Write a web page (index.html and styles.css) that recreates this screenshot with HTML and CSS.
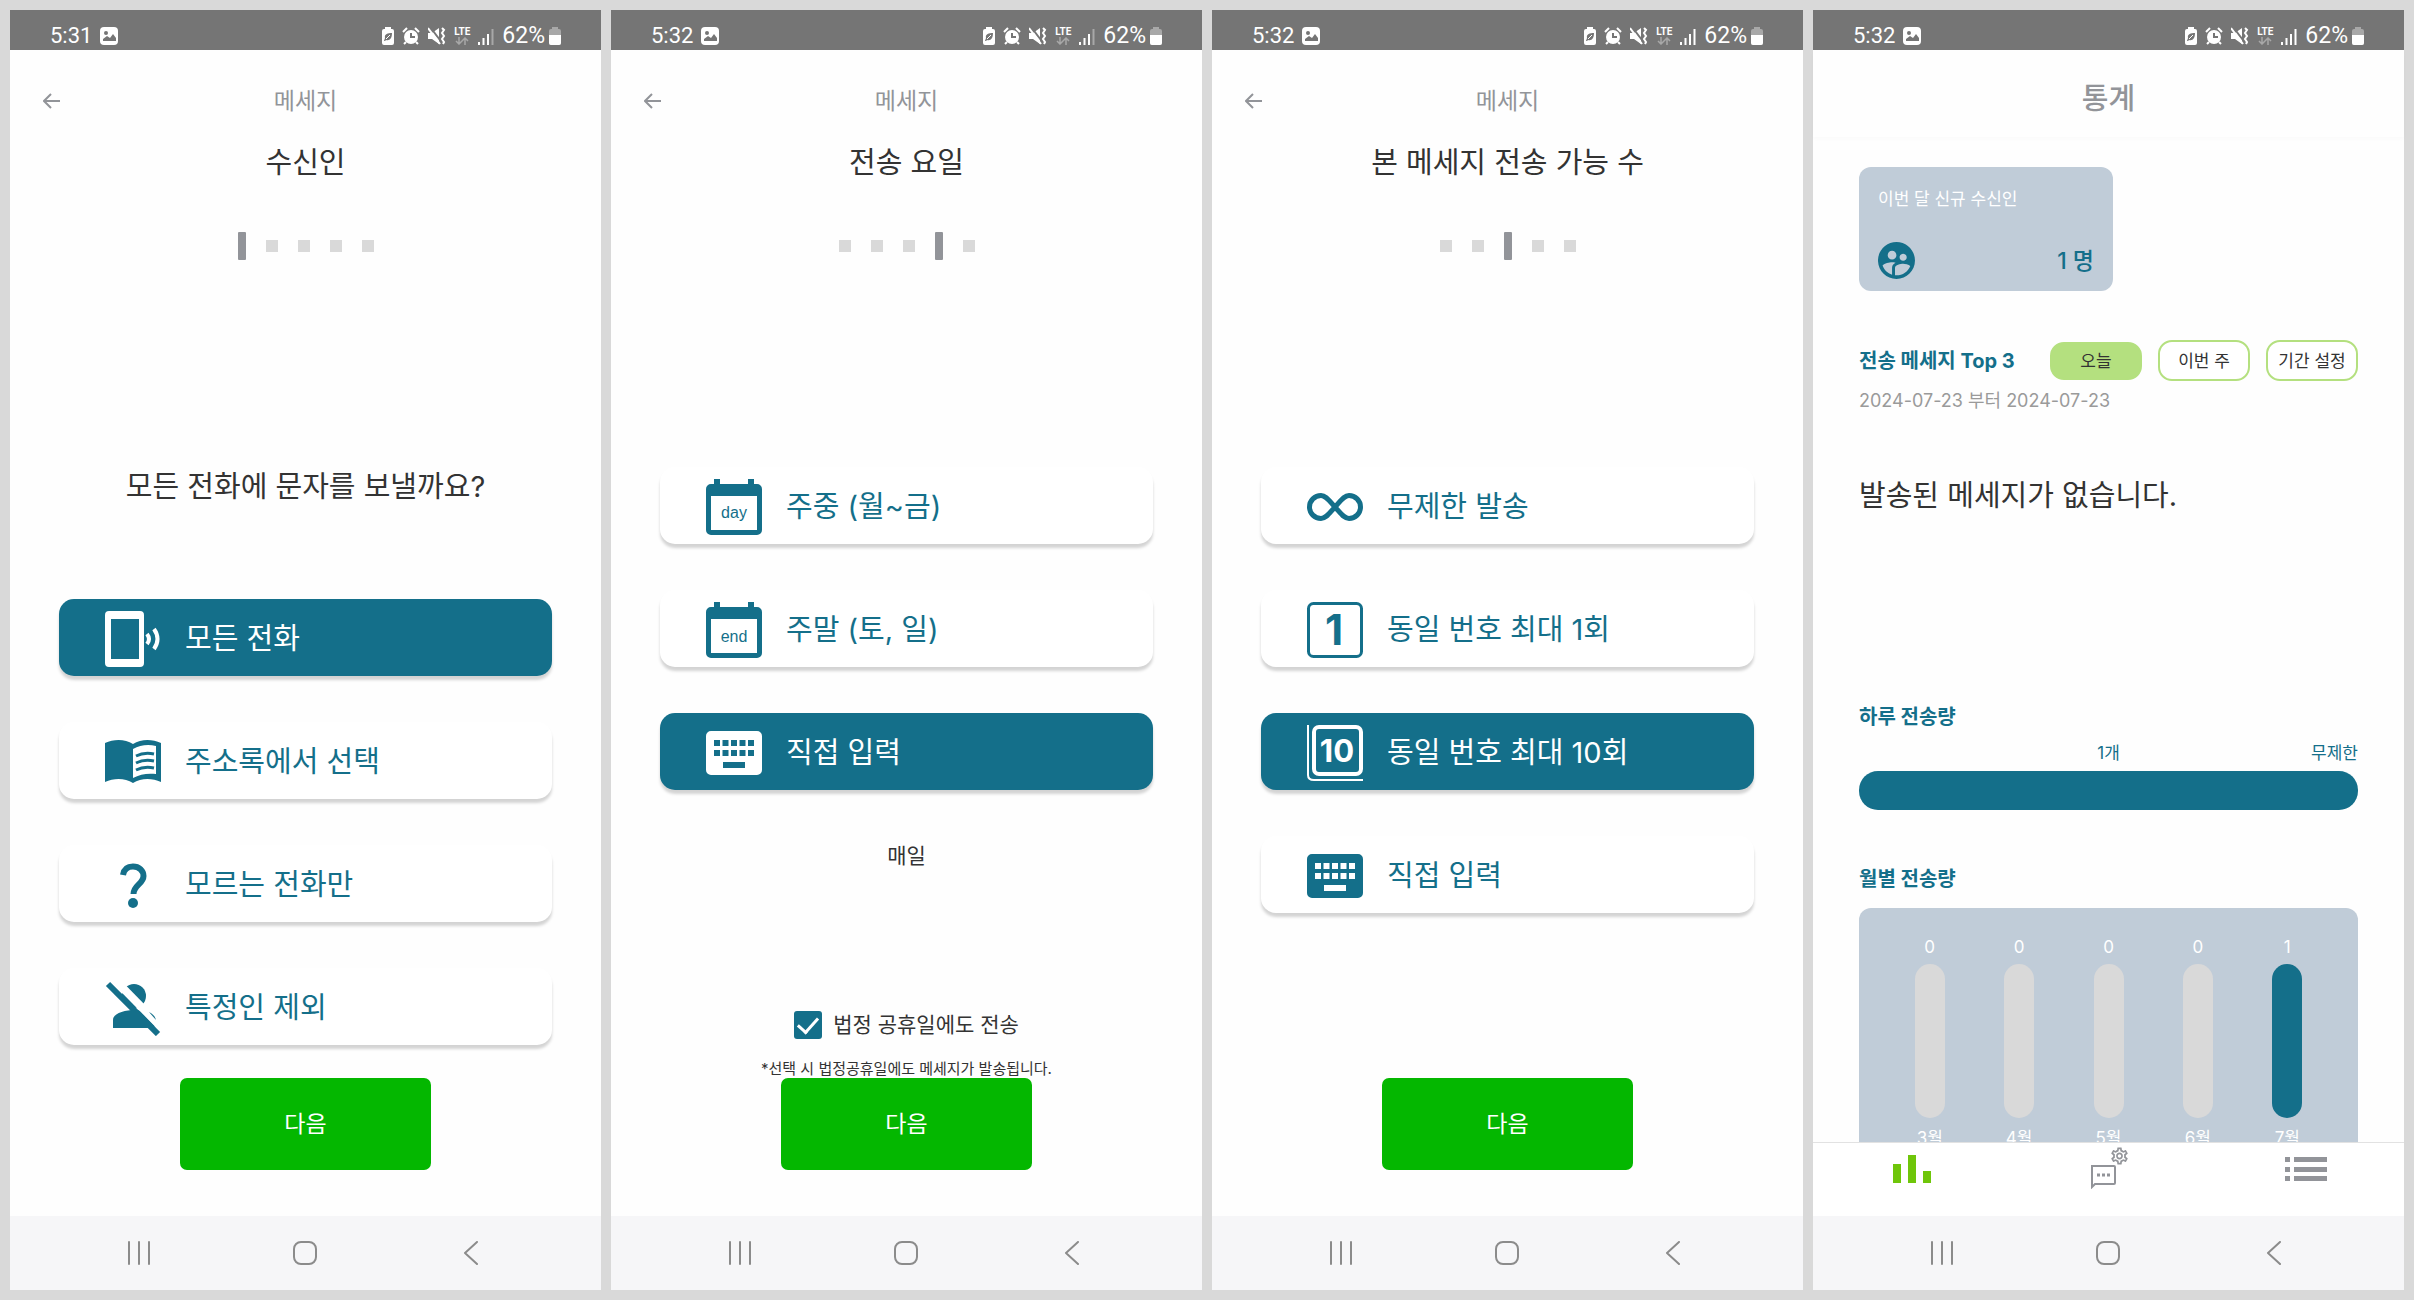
FILE: index.html
```html
<!DOCTYPE html>
<html lang="ko">
<head>
    <meta charset="UTF-8">
    <meta name="viewport" content="width=device-width, initial-scale=1.0">
    <title>메세지 자동 전송</title>
    <link rel="stylesheet" href="styles.css">
</head>
<body>
    <!-- shared icons -->
    <svg class="sprite" aria-hidden="true">
        <symbol id="i-image" viewBox="0 0 18 18">
            <rect x="0" y="0" width="18" height="18" rx="4" fill="#fff"/>
            <circle cx="6" cy="6" r="2" fill="#757575"/>
            <path d="M3 14v-2l4-3 3 2 3-4 3 4v3z" fill="#757575"/>
        </symbol>
        <symbol id="i-saver" viewBox="0 0 12 18">
            <path d="M3 2V0h6v2h1a2 2 0 0 1 2 2v12a2 2 0 0 1-2 2H2a2 2 0 0 1-2-2V4a2 2 0 0 1 2-2z" fill="#fff"/>
            <path d="M10 6c-4 0-8 1-7 5l-1 3h1l1-1c4 1 6-2 6-7z" fill="#757575"/>
            <path d="M4 12l4-4" stroke="#fff"/>
        </symbol>
        <symbol id="i-alarm" viewBox="0 0 18 18">
            <circle cx="9" cy="10" r="7" fill="#fff"/>
            <path d="M1 5l4-4M17 5l-4-4M4 15l-2 2M14 15l2 2" stroke="#fff" stroke-width="2"/>
            <path d="M9 6v4h4" stroke="#757575" stroke-width="2" fill="none"/>
        </symbol>
        <symbol id="i-mute" viewBox="0 0 18 18">
            <path d="M0 6h4l7-5v16l-7-5H0z" fill="#fff"/>
            <path d="M2 0l13 17" stroke="#757575" stroke-width="2"/>
            <path d="M0 1l12 16" stroke="#fff" stroke-width="2"/>
            <path d="M14 1l2 2-2 3 2 3-2 3 2 3-1 2" stroke="#fff" stroke-width="2" fill="none"/>
        </symbol>
        <symbol id="i-updown" viewBox="0 0 14 8">
            <path d="M4 0v7M1 4l3 3 3-3M10 8V1M7 4l3-3 3 3" stroke="#a8a8a8" stroke-width="1.5" fill="none"/>
        </symbol>
        <symbol id="i-signal" viewBox="0 0 16 18">
            <path d="M1 15v3M5.500 11v7M10 7v11" stroke="#fff" stroke-width="2"/>
            <path d="M14.500 2v16" stroke="#a8a8a8" stroke-width="2"/>
        </symbol>
        <symbol id="i-signal-full" viewBox="0 0 16 18">
            <path d="M1 15v3M5.500 11v7M10 7v11M14.500 2v16" stroke="#fff" stroke-width="2"/>
        </symbol>
        <symbol id="i-battery" viewBox="0 0 12 18">
            <path d="M3 2V0h6v2h1a2 2 0 0 1 2 2v12a2 2 0 0 1-2 2H2a2 2 0 0 1-2-2V4a2 2 0 0 1 2-2z" fill="#a8a8a8"/>
            <path d="M0 8h12v8a2 2 0 0 1-2 2H2a2 2 0 0 1-2-2z" fill="#fff"/>
        </symbol>
        <symbol id="i-arrow" viewBox="0 0 18 18">
            <path d="M17 9H1M8 2L1 9l7 7" stroke="currentColor" stroke-width="2" fill="none"/>
        </symbol>
        <symbol id="i-recents" viewBox="0 0 24 24">
            <path d="M2 1v22M12 1v22M22 1v22" stroke="currentColor" stroke-width="2" stroke-linecap="round"/>
        </symbol>
        <symbol id="i-home" viewBox="0 0 24 24">
            <rect x="1" y="1" width="22" height="22" rx="7" stroke="currentColor" stroke-width="2" fill="none"/>
        </symbol>
        <symbol id="i-back" viewBox="0 0 24 24">
            <path d="M17 1L5 12l12 11" stroke="currentColor" stroke-width="2" stroke-linecap="round" stroke-linejoin="round" fill="none"/>
        </symbol>
        <symbol id="i-keyboard" viewBox="0 0 56 56">
            <path fill="currentColor" fill-rule="evenodd" d="M5 6h46a5 5 0 0 1 5 5v34a5 5 0 0 1-5 5H5a5 5 0 0 1-5-5V11a5 5 0 0 1 5-5zM8 15v6h6v-6zM16.500 15v6h6v-6zM25 15v6h6v-6zM33.500 15v6h6v-6zM42 15v6h6v-6zM8 25v6h6v-6zM16.500 25v6h6v-6zM25 25v6h6v-6zM33.500 25v6h6v-6zM42 25v6h6v-6zM17 37v6h22v-6z"/>
        </symbol>
        <symbol id="i-calendar" viewBox="0 0 56 56">
            <path fill="currentColor" fill-rule="evenodd" d="M8 5V0h6v5h28V0h6v5h3a5 5 0 0 1 5 5v41a5 5 0 0 1-5 5H5a5 5 0 0 1-5-5V10a5 5 0 0 1 5-5zM5 17v34h46V17z"/>
        </symbol>
    </svg>

    <main class="screens">
        <!-- 수신인 -->
        <section class="screen">
            <div class="status-bar">
                <span>5:31</span>
                <svg class="icon-18"><use href="#i-image"/></svg>
                <div class="status-right">
                    <svg class="icon-12"><use href="#i-saver"/></svg>
                    <svg class="icon-18"><use href="#i-alarm"/></svg>
                    <svg class="icon-18"><use href="#i-mute"/></svg>
                    <span class="lte">LTE<svg><use href="#i-updown"/></svg></span>
                    <svg class="icon-16"><use href="#i-signal"/></svg>
                    <span class="battery">62%<svg class="icon-12"><use href="#i-battery"/></svg></span>
                </div>
            </div>
            <header class="top-bar">
                <button class="back" aria-label="뒤로"><svg class="icon-18"><use href="#i-arrow"/></svg></button>
                <span>메세지</span>
            </header>
            <h1>수신인</h1>
            <ol class="steps"><li class="current"></li><li></li><li></li><li></li><li></li></ol>
            <div class="content">
                <p class="question">모든 전화에 문자를 보낼까요?</p>
                <div class="options">
                    <button class="option selected">
                        <svg viewBox="0 0 56 56">
                            <path fill="currentColor" fill-rule="evenodd" d="M4 0h31a4 4 0 0 1 4 4v48a4 4 0 0 1-4 4H4a4 4 0 0 1-4-4V4a4 4 0 0 1 4-4zM6 8v40h28V8z"/>
                            <path d="M42 23q4 5 0 10M49 18q7 10 0 20" stroke="currentColor" stroke-width="4" fill="none"/>
                        </svg>
                        모든 전화
                    </button>
                    <button class="option">
                        <svg viewBox="0 0 56 56">
                            <path fill="currentColor" fill-rule="evenodd" d="M0 9C9 5 20 5 28 10c8-5 19-5 28-1v39c-9-4-20-4-28 1-8-5-19-5-28-1zM28 15v29c7-4 15-5 23-4V12c-8-2-16-1-23 3z"/>
                            <path d="M31 22q8-4 18-2M31 29q8-4 18-2M31 36q8-4 18-2" stroke="currentColor" stroke-width="3" fill="none"/>
                        </svg>
                        주소록에서 선택
                    </button>
                    <button class="option">
                        <svg viewBox="0 0 56 56">
                            <path d="M18 18c1-6 5-8.500 10-8.500 6 0 10.500 4 10.500 9.500 0 8-10 9-10 18" stroke="currentColor" stroke-width="6" fill="none"/>
                            <circle cx="28" cy="46" r="5" fill="currentColor"/>
                        </svg>
                        모르는 전화만
                    </button>
                    <button class="option">
                        <svg viewBox="0 0 56 56">
                            <circle cx="29" cy="16" r="12" fill="currentColor"/>
                            <path d="M8 48v-8c0-7 12-10 22-10s22 4 22 10v8z" fill="currentColor"/>
                            <path d="M8 -2l51 52" stroke="#fff" stroke-width="8"/>
                            <path d="M56 30v20h-8z" fill="#fff"/>
                            <path d="M44 32q6 3 7 8z" fill="currentColor"/>
                            <path d="M3 4l50 50" stroke="currentColor" stroke-width="6"/>
                        </svg>
                        특정인 제외
                    </button>
                </div>
            </div>
            <div class="actions">
                <button class="next">다음</button>
            </div>
            <nav class="system-nav">
                <button aria-label="최근 앱"><svg><use href="#i-recents"/></svg></button>
                <button aria-label="홈"><svg><use href="#i-home"/></svg></button>
                <button aria-label="이전"><svg><use href="#i-back"/></svg></button>
            </nav>
        </section>

        <!-- 전송 요일 -->
        <section class="screen">
            <div class="status-bar">
                <span>5:32</span>
                <svg class="icon-18"><use href="#i-image"/></svg>
                <div class="status-right">
                    <svg class="icon-12"><use href="#i-saver"/></svg>
                    <svg class="icon-18"><use href="#i-alarm"/></svg>
                    <svg class="icon-18"><use href="#i-mute"/></svg>
                    <span class="lte">LTE<svg><use href="#i-updown"/></svg></span>
                    <svg class="icon-16"><use href="#i-signal"/></svg>
                    <span class="battery">62%<svg class="icon-12"><use href="#i-battery"/></svg></span>
                </div>
            </div>
            <header class="top-bar">
                <button class="back" aria-label="뒤로"><svg class="icon-18"><use href="#i-arrow"/></svg></button>
                <span>메세지</span>
            </header>
            <h1>전송 요일</h1>
            <ol class="steps"><li></li><li></li><li></li><li class="current"></li><li></li></ol>
            <div class="content">
                <div class="options">
                    <button class="option">
                        <svg viewBox="0 0 56 56"><use href="#i-calendar"/><text x="28" y="39" class="icon-text">day</text></svg>
                        주중 (월~금)
                    </button>
                    <button class="option">
                        <svg viewBox="0 0 56 56"><use href="#i-calendar"/><text x="28" y="40" class="icon-text">end</text></svg>
                        주말 (토, 일)
                    </button>
                    <button class="option selected">
                        <svg><use href="#i-keyboard"/></svg>
                        직접 입력
                    </button>
                </div>
                <p class="days">매일</p>
            </div>
            <div class="actions">
                <label class="holiday" for="holiday">
                    <input type="checkbox" id="holiday" checked>
                    법정 공휴일에도 전송
                </label>
                <p class="note">*선택 시 법정공휴일에도 메세지가 발송됩니다.</p>
                <button class="next">다음</button>
            </div>
            <nav class="system-nav">
                <button aria-label="최근 앱"><svg><use href="#i-recents"/></svg></button>
                <button aria-label="홈"><svg><use href="#i-home"/></svg></button>
                <button aria-label="이전"><svg><use href="#i-back"/></svg></button>
            </nav>
        </section>

        <!-- 전송 가능 수 -->
        <section class="screen">
            <div class="status-bar">
                <span>5:32</span>
                <svg class="icon-18"><use href="#i-image"/></svg>
                <div class="status-right">
                    <svg class="icon-12"><use href="#i-saver"/></svg>
                    <svg class="icon-18"><use href="#i-alarm"/></svg>
                    <svg class="icon-18"><use href="#i-mute"/></svg>
                    <span class="lte">LTE<svg><use href="#i-updown"/></svg></span>
                    <svg class="icon-16"><use href="#i-signal-full"/></svg>
                    <span class="battery">62%<svg class="icon-12"><use href="#i-battery"/></svg></span>
                </div>
            </div>
            <header class="top-bar">
                <button class="back" aria-label="뒤로"><svg class="icon-18"><use href="#i-arrow"/></svg></button>
                <span>메세지</span>
            </header>
            <h1>본 메세지 전송 가능 수</h1>
            <ol class="steps"><li></li><li></li><li class="current"></li><li></li><li></li></ol>
            <div class="content">
                <div class="options">
                    <button class="option">
                        <svg viewBox="0 0 56 56">
                            <path d="M28 28C22 34.500 19 39.500 14 39.500A11.500 11.500 0 0 1 14 16.500C19 16.500 22 21.500 28 28C34 34.500 37 39.500 42 39.500A11.500 11.500 0 0 0 42 16.500C37 16.500 34 21.500 28 28Z" stroke="currentColor" stroke-width="5" fill="none"/>
                        </svg>
                        무제한 발송
                    </button>
                    <button class="option">
                        <svg viewBox="0 0 56 56">
                            <rect x="1.500" y="1.500" width="53" height="53" rx="5" stroke="currentColor" stroke-width="3" fill="none"/>
                            <text x="27" y="43" class="icon-number">1</text>
                        </svg>
                        동일 번호 최대 1회
                    </button>
                    <button class="option selected">
                        <svg viewBox="0 0 56 56">
                            <path d="M1 0v50q0 5 6 5h49" stroke="currentColor" stroke-width="2" fill="none"/>
                            <rect x="7" y="2" width="47" height="47" rx="5" stroke="currentColor" stroke-width="4" fill="none"/>
                            <text x="30" y="37" class="icon-number small">10</text>
                        </svg>
                        동일 번호 최대 10회
                    </button>
                    <button class="option">
                        <svg><use href="#i-keyboard"/></svg>
                        직접 입력
                    </button>
                </div>
            </div>
            <div class="actions">
                <button class="next">다음</button>
            </div>
            <nav class="system-nav">
                <button aria-label="최근 앱"><svg><use href="#i-recents"/></svg></button>
                <button aria-label="홈"><svg><use href="#i-home"/></svg></button>
                <button aria-label="이전"><svg><use href="#i-back"/></svg></button>
            </nav>
        </section>

        <!-- 통계 -->
        <section class="screen">
            <div class="status-bar">
                <span>5:32</span>
                <svg class="icon-18"><use href="#i-image"/></svg>
                <div class="status-right">
                    <svg class="icon-12"><use href="#i-saver"/></svg>
                    <svg class="icon-18"><use href="#i-alarm"/></svg>
                    <svg class="icon-18"><use href="#i-mute"/></svg>
                    <span class="lte">LTE<svg><use href="#i-updown"/></svg></span>
                    <svg class="icon-16"><use href="#i-signal-full"/></svg>
                    <span class="battery">62%<svg class="icon-12"><use href="#i-battery"/></svg></span>
                </div>
            </div>
            <header class="stats-header">통계</header>
            <div class="stats">
                <div class="new-card">
                    <span>이번 달 신규 수신인</span>
                    <div class="new-count">
                        <svg viewBox="2 2 20 20"><path fill="currentColor" d="M11.990 2c-5.520 0-10 4.480-10 10s4.480 10 10 10 10-4.480 10-10-4.480-10-10-10zm3.610 6.340c1.070 0 1.930.86 1.930 1.930 0 1.070-.86 1.930-1.930 1.930-1.070 0-1.930-.86-1.930-1.930-.01-1.070.86-1.930 1.930-1.930zm-6-1.580c1.300 0 2.360 1.060 2.360 2.360 0 1.300-1.060 2.360-2.360 2.360-1.300 0-2.360-1.060-2.360-2.360 0-1.310 1.050-2.360 2.360-2.360zm0 9.130v3.750c-2.400-.75-4.300-2.600-5.140-4.960 1.050-1.120 3.670-1.690 5.140-1.690.53 0 1.200.08 1.900.22-1.640.87-1.900 2.020-1.900 2.680zM11.990 20c-.27 0-.53-.01-.79-.04v-4.070c0-1.420 2.940-2.130 4.400-2.130 1.070 0 2.920.39 3.840 1.150-1.170 2.970-4.060 5.090-7.450 5.090z"/></svg>
                        <strong>1 명</strong>
                    </div>
                </div>

                <div class="top-row">
                    <h2>전송 메세지 Top 3</h2>
                    <div class="chips">
                        <button class="chip active">오늘</button>
                        <button class="chip">이번 주</button>
                        <button class="chip">기간 설정</button>
                    </div>
                </div>
                <p class="period">2024-07-23 부터 2024-07-23</p>
                <p class="empty">발송된 메세지가 없습니다.</p>

                <h2>하루 전송량</h2>
                <div class="limits"><span></span><span>1개</span><span>무제한</span></div>
                <div class="daily-bar"></div>

                <h2>월별 전송량</h2>
                <div class="chart">
                    <div class="month">0<i></i>3월</div>
                    <div class="month">0<i></i>4월</div>
                    <div class="month">0<i></i>5월</div>
                    <div class="month">0<i></i>6월</div>
                    <div class="month now">1<i></i>7월</div>
                </div>
            </div>
            <nav class="tab-bar">
                <a href="#stats" class="active" aria-label="통계">
                    <svg viewBox="0 0 38 42"><path fill="currentColor" d="M0 17h8v19H0zM15 8h8v28h-8zM30 24h8v12h-8z"/></svg>
                </a>
                <a href="#messages" aria-label="메세지 설정">
                    <svg viewBox="0 0 38 42">
                        <path d="M2 19h22a1 1 0 0 1 1 1v16a1 1 0 0 1-1 1H5l-3 3V19z" stroke="currentColor" stroke-width="2" fill="none"/>
                        <path d="M7 28h3M12 28h3M17 28h3" stroke="currentColor" stroke-width="3"/>
                        <svg x="21" y="0" width="17" height="18" viewBox="2 2 20 20"><path fill="currentColor" d="M19.430 12.980c.04-.32.07-.64.07-.98 0-.34-.03-.66-.07-.98l2.110-1.650c.19-.15.24-.42.12-.64l-2-3.460c-.09-.16-.26-.25-.44-.25-.06 0-.12.01-.17.03l-2.490 1c-.52-.4-1.080-.73-1.690-.98l-.38-2.650C14.460 2.180 14.250 2 14 2h-4c-.25 0-.46.18-.49.42l-.38 2.650c-.61.25-1.170.59-1.690.98l-2.490-1c-.06-.02-.12-.03-.18-.03-.17 0-.34.09-.43.25l-2 3.460c-.13.22-.07.49.12.64l2.110 1.650c-.04.32-.07.65-.07.98 0 .33.03.66.07.98l-2.110 1.650c-.19.15-.24.42-.12.64l2 3.460c.09.16.26.25.44.25.06 0 .12-.01.17-.03l2.490-1c.52.4 1.080.73 1.690.98l.38 2.650c.03.24.24.42.49.42h4c.25 0 .46-.18.49-.42l.38-2.650c.61-.25 1.170-.59 1.690-.98l2.490 1c.06.02.12.03.18.03.17 0 .34-.09.43-.25l2-3.460c.12-.22.07-.49-.12-.64l-2.110-1.650zm-1.980-1.710c.04.31.05.52.05.73 0 .21-.02.43-.05.73l-.14 1.130.89.7 1.080.84-.7 1.210-1.270-.51-1.040-.42-.9.68c-.43.32-.84.56-1.250.73l-1.060.43-.16 1.130-.2 1.350h-1.400l-.19-1.350-.16-1.130-1.060-.43c-.43-.18-.83-.41-1.230-.71l-.91-.7-1.060.43-1.270.51-.7-1.210 1.080-.84.89-.7-.14-1.130c-.03-.31-.05-.54-.05-.74s.02-.43.05-.73l.14-1.130-.89-.7-1.080-.84.7-1.210 1.270.51 1.040.42.9-.68c.43-.32.84-.56 1.250-.73l1.060-.43.16-1.130.2-1.350h1.390l.19 1.350.16 1.130 1.060.43c.43.18.83.41 1.230.71l.91.7 1.060-.43 1.270-.51.7 1.210-1.070.85-.89.7.14 1.130zM12 8c-2.210 0-4 1.790-4 4s1.790 4 4 4 4-1.790 4-4-1.790-4-4-4zm0 6c-1.100 0-2-.9-2-2s.9-2 2-2 2 .9 2 2-.9 2-2 2z"/></svg>
                    </svg>
                </a>
                <a href="#list" aria-label="목록">
                    <svg class="wide" viewBox="0 0 42 42"><path fill="currentColor" d="M0 10h5v5H0zM9 10h33v5H9zM0 20h5v5H0zM9 20h33v5H9zM0 29h5v5H0zM9 29h33v5H9z"/></svg>
                </a>
            </nav>
            <nav class="system-nav">
                <button aria-label="최근 앱"><svg><use href="#i-recents"/></svg></button>
                <button aria-label="홈"><svg><use href="#i-home"/></svg></button>
                <button aria-label="이전"><svg><use href="#i-back"/></svg></button>
            </nav>
        </section>
    </main>
</body>
</html>
```

FILE: styles.css
```css
:root {
    --teal: #146f8a;
    --green: #04b700;
    --lime: #b4e07f;
    --gray: #929499;
    --light-gray: #d9d9d9;
    --blue-gray: #c0ccd8;
    --text: #333;
}

* {
    margin: 0;
    padding: 0;
    box-sizing: border-box;
}

body {
    background: var(--light-gray);
    color: var(--text);
    font-family: Inter, "Noto Sans CJK KR", sans-serif;
    font-size: 17px;
    line-height: 24px;
}

button {
    border: none;
    background: none;
    color: inherit;
    font: inherit;
    cursor: pointer;
}

svg {
    display: block;
    flex: none;
}

.sprite {
    display: none;
}

.screens {
    display: grid;
    grid-template-columns: repeat(4, 1fr);
    grid-template-rows: minmax(0, 1fr);
    gap: 10px;
    height: 100vh;
    padding: 10px;
}

.screen {
    display: flex;
    flex-direction: column;
    min-width: 0;
    min-height: 0;
    background: #fefefe;
}

/* status bar */
.status-bar {
    display: flex;
    align-items: center;
    gap: 8px;
    padding: 12px 40px 0;
    height: 40px;
    background: #757575;
    color: #fff;
    font-family: Roboto, sans-serif;
    font-size: 22px;
}

.status-right {
    display: flex;
    align-items: center;
    gap: 8px;
    margin-left: auto;
}

.icon-12 {
    width: 12px;
    height: 18px;
}

.icon-16 {
    width: 16px;
    height: 18px;
}

.icon-18 {
    width: 18px;
    height: 18px;
}

.lte {
    display: flex;
    flex-direction: column;
    align-items: center;
    font-size: 10px;
    font-weight: 700;
    line-height: 10px;
}

.lte svg {
    width: 14px;
    height: 8px;
}

.battery {
    display: flex;
    align-items: center;
    gap: 4px;
    font-size: 23px;
}

/* message steps */
.top-bar {
    display: grid;
    grid-template-columns: 1fr auto 1fr;
    align-items: center;
    padding: 36px 33px 0;
    color: var(--gray);
    font-size: 23px;
    line-height: 30px;
}

.back {
    justify-self: start;
}

h1 {
    margin-top: 27px;
    font-size: 29px;
    font-weight: 400;
    line-height: 40px;
    text-align: center;
}

.steps {
    display: flex;
    justify-content: center;
    align-items: center;
    gap: 20px;
    margin-top: 49px;
    list-style: none;
}

.steps li {
    width: 12px;
    height: 12px;
    background: var(--light-gray);
}

.steps .current {
    width: 8px;
    height: 28px;
    border-radius: 1px;
    background: var(--gray);
}

.content {
    padding: 207px 49px 0;
}

.question {
    margin-bottom: 92px;
    font-size: 29px;
    line-height: 40px;
    text-align: center;
}

.options {
    display: flex;
    flex-direction: column;
    gap: 46px;
}

.option {
    display: flex;
    align-items: center;
    gap: 24px;
    height: 77px;
    padding: 2px 0 0 46px;
    border-radius: 15px;
    background: #fff;
    box-shadow: 0 4px 3px rgba(0, 0, 0, 0.17);
    color: var(--teal);
    font-size: 29px;
}

.option.selected {
    background: var(--teal);
    color: #fff;
}

.option svg {
    width: 56px;
    height: 56px;
}

.icon-text {
    fill: currentColor;
    font: 16px "Liberation Sans", sans-serif;
    text-anchor: middle;
}

.icon-number {
    fill: currentColor;
    font: 700 42px Inter, sans-serif;
    text-anchor: middle;
}

.icon-number.small {
    font-size: 31px;
}

.days {
    margin-top: 51px;
    font-size: 21px;
    line-height: 30px;
    text-align: center;
}

.actions {
    display: flex;
    flex-direction: column;
    align-items: center;
    margin-top: auto;
    padding-bottom: 46px;
}

.holiday {
    display: flex;
    align-items: center;
    gap: 11px;
    margin-bottom: 21px;
    font-size: 21px;
    line-height: 28px;
}

.holiday input {
    appearance: none;
    display: grid;
    place-items: center;
    width: 28px;
    height: 28px;
    border-radius: 3px;
    background: var(--light-gray);
}

.holiday input:checked {
    background: var(--teal);
}

.holiday input:checked::before {
    content: "";
    width: 9px;
    height: 17px;
    margin-bottom: 5px;
    border: solid #fff;
    border-width: 0 3px 3px 0;
    transform: rotate(42deg);
}

.note {
    font-size: 15px;
    line-height: 18px;
}

.next {
    width: 251px;
    height: 92px;
    border-radius: 7px;
    background: var(--green);
    color: #fff;
    font-size: 23px;
}

.system-nav {
    display: flex;
    flex: none;
    height: 74px;
    padding: 0 46px;
    background: #f6f6f8;
    color: #8b8b8b;
}

.system-nav button {
    display: grid;
    flex: 1;
    place-items: center;
}

.system-nav svg {
    width: 24px;
    height: 24px;
}

/* statistics */
.stats-header {
    padding: 29px 0 18px;
    box-shadow: 0 2px 4px rgba(0, 0, 0, 0.02);
    color: var(--gray);
    font-size: 29px;
    font-weight: 500;
    line-height: 40px;
    text-align: center;
}

.stats {
    flex: 1;
    min-height: 0;
    padding: 30px 46px 0;
    overflow: hidden;
}

.new-card {
    width: 254px;
    padding: 20px 19px 12px;
    border-radius: 12px;
    background: var(--blue-gray);
    color: #fff;
}

.new-count {
    display: flex;
    justify-content: space-between;
    align-items: center;
    margin-top: 31px;
    color: var(--teal);
    font-size: 23px;
}

.new-count svg {
    width: 37px;
    height: 37px;
}

.new-count strong {
    font-weight: 500;
}

h2 {
    color: var(--teal);
    font-size: 20px;
    font-weight: 700;
    line-height: 28px;
}

.top-row {
    display: flex;
    justify-content: space-between;
    align-items: center;
    margin-top: 49px;
}

.chips {
    display: flex;
    align-items: center;
    gap: 16px;
}

.chip {
    width: 92px;
    height: 41px;
    border: 2px solid var(--lime);
    border-radius: 14px;
    background: #fff;
}

.chip.active {
    height: 38px;
    background: var(--lime);
}

.period {
    margin-top: 8px;
    color: #9a9a9a;
    font-size: 18px;
}

.empty {
    margin: 63px 0 187px;
    font-size: 29px;
    line-height: 40px;
}

.limits {
    display: grid;
    grid-template-columns: 1fr auto 1fr;
    margin: 10px 0 6px;
    color: var(--teal);
}

.limits span:last-child {
    text-align: right;
}

.daily-bar {
    height: 39px;
    margin-bottom: 55px;
    border-radius: 19px;
    background: var(--teal);
}

.chart {
    display: flex;
    margin-top: 15px;
    padding: 27px 26px;
    border-radius: 12px;
    background: var(--blue-gray);
    color: #fff;
}

.month {
    display: flex;
    flex: 1;
    flex-direction: column;
    align-items: center;
}

.month i {
    width: 30px;
    height: 154px;
    margin: 5px 0 8px;
    border-radius: 15px;
    background: var(--light-gray);
}

.month.now i {
    background: var(--teal);
}

.tab-bar {
    display: flex;
    flex: none;
    height: 74px;
    border-top: 1px solid #e2e2e2;
    background: #fff;
    color: var(--gray);
}

.tab-bar a {
    display: flex;
    flex: 1;
    justify-content: center;
    padding-top: 4px;
    color: inherit;
}

.tab-bar a.active {
    color: #6fc60a;
}

.tab-bar svg {
    width: 38px;
    height: 42px;
}

.tab-bar .wide {
    width: 42px;
}

.tab-bar svg svg {
    width: 17px;
    height: 18px;
}
```
